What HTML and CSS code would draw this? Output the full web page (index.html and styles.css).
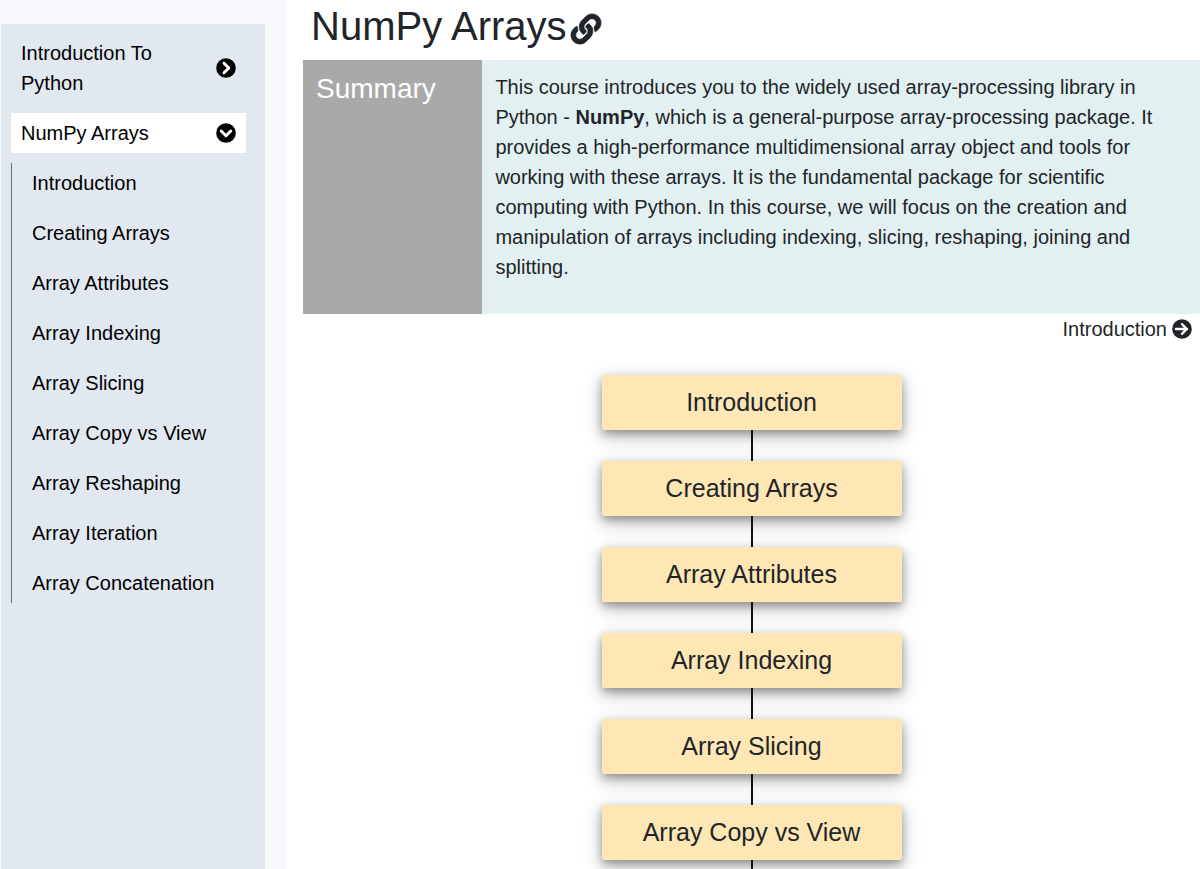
FILE: index.html
```
<!DOCTYPE html>
<html lang="en">
<head>
    <meta charset="UTF-8" />
    <meta name="viewport" content="width=device-width, initial-scale=1.0" />
    <title>NumPy Arrays</title>
    <link rel="stylesheet" href="styles.css">
</head>
<body>
<div class="layout">
    <aside class="sidebar">
        <nav class="sidebar-panel">
            <button class="course">
                <span>Introduction To Python</span>
                <svg class="icon" viewBox="0 0 20 20"><circle cx="10" cy="10" r="9.8" fill="currentColor"/><path class="mark-light" d="M8 5.2l4.8 4.8L8 14.8"/></svg>
            </button>
            <button class="course active">
                <span>NumPy Arrays</span>
                <svg class="icon" viewBox="0 0 20 20"><circle cx="10" cy="10" r="9.8" fill="currentColor"/><path class="mark-light" d="M5.2 8l4.8 4.8L14.8 8"/></svg>
            </button>
            <ul class="lessons">
                <li><a href="#introduction">Introduction</a></li>
                <li><a href="#creating">Creating Arrays</a></li>
                <li><a href="#attributes">Array Attributes</a></li>
                <li><a href="#indexing">Array Indexing</a></li>
                <li><a href="#slicing">Array Slicing</a></li>
                <li><a href="#copy-view">Array Copy vs View</a></li>
                <li><a href="#reshaping">Array Reshaping</a></li>
                <li><a href="#iteration">Array Iteration</a></li>
                <li><a href="#concatenation">Array Concatenation</a></li>
            </ul>
        </nav>
    </aside>

    <main class="content">
        <h1>
            NumPy Arrays
            <a class="permalink" href="#" aria-label="Link to this course">
                <svg viewBox="0 0 512 512"><path fill="currentColor" stroke="currentColor" stroke-width="14" d="M326.612 185.391c59.747 59.809 58.927 155.698.36 214.59-.11.12-.24.25-.36.37l-67.2 67.2c-59.27 59.27-155.699 59.262-214.96 0-59.27-59.26-59.27-155.7 0-214.96l37.106-37.106c9.84-9.84 26.786-3.3 27.294 10.606.648 17.722 3.826 35.527 9.69 52.721 1.986 5.822.567 12.262-3.783 16.612l-13.087 13.087c-28.026 28.026-28.905 73.66-1.155 101.96 28.024 28.579 74.086 28.749 102.325.51l67.2-67.19c28.191-28.191 28.073-73.757 0-101.83-3.701-3.694-7.429-6.564-10.341-8.569a16.037 16.037 0 0 1-6.947-12.606c-.396-10.567 3.348-21.456 11.698-29.806l21.054-21.055c5.521-5.521 14.182-6.199 20.584-1.731a152.482 152.482 0 0 1 20.522 17.197zM467.547 44.449c-59.261-59.262-155.69-59.27-214.96 0l-67.2 67.2c-.12.12-.25.25-.36.37-58.566 58.892-59.387 154.781.36 214.59a152.454 152.454 0 0 0 20.521 17.196c6.402 4.468 15.064 3.789 20.584-1.731l21.054-21.055c8.35-8.35 12.094-19.239 11.698-29.806a16.037 16.037 0 0 0-6.947-12.606c-2.912-2.005-6.64-4.875-10.341-8.569-28.073-28.073-28.191-73.639 0-101.83l67.2-67.19c28.239-28.239 74.3-28.069 102.325.51 27.75 28.3 26.872 73.934-1.155 101.96l-13.087 13.087c-4.35 4.35-5.769 10.79-3.783 16.612 5.864 17.194 9.042 34.999 9.69 52.721.509 13.906 17.454 20.446 27.294 10.606l37.106-37.106c59.271-59.259 59.271-155.699.001-214.959z"/></svg>
            </a>
        </h1>

        <section class="summary">
            <h2>Summary</h2>
            <p>This course introduces you to the widely used array-processing library in Python - <strong>NumPy</strong>, which is a general-purpose array-processing package. It provides a high-performance multidimensional array object and tools for working with these arrays. It is the fundamental package for scientific computing with Python. In this course, we will focus on the creation and manipulation of arrays including indexing, slicing, reshaping, joining and splitting.</p>
        </section>

        <div class="pager">
            <a href="#introduction">
                Introduction
                <svg class="icon" viewBox="0 0 20 20"><circle cx="10" cy="10" r="9.8" fill="currentColor"/><path class="mark-light arrow" d="M4 10h11M10 5.2l4.8 4.8-4.8 4.8"/></svg>
            </a>
        </div>

        <!-- course roadmap -->
        <div class="roadmap">
            <a class="step" href="#introduction">Introduction</a>
            <a class="step" href="#creating">Creating Arrays</a>
            <a class="step" href="#attributes">Array Attributes</a>
            <a class="step" href="#indexing">Array Indexing</a>
            <a class="step" href="#slicing">Array Slicing</a>
            <a class="step" href="#copy-view">Array Copy vs View</a>
        </div>
    </main>
</div>
</body>
</html>
```
FILE: styles.css
```
* {
    box-sizing: border-box;
}
body {
    margin: 0;
    font-family: "Liberation Sans", Arial, sans-serif;
    font-size: 20px;
    line-height: 30px;
    color: #212529;
    background-color: #fff;
}
a {
    color: inherit;
    text-decoration: none;
}
.layout {
    display: flex;
    height: 100vh;
    overflow: hidden;
}
.icon {
    width: 20px;
    height: 20px;
    flex-shrink: 0;
}
.mark-light {
    fill: none;
    stroke: #fff;
    stroke-width: 3;
    stroke-linecap: round;
    stroke-linejoin: round;
}
.mark-light.arrow {
    stroke-width: 2.4;
}

/* sidebar */
.sidebar {
    width: 286px;
    flex-shrink: 0;
    display: flex;
    padding: 24px 21px 0 1px;
    background-color: #f6f8fb;
    color: #000;
}
.sidebar-panel {
    flex: 1;
    display: flex;
    flex-direction: column;
    gap: 10px;
    padding: 9px 19px 0 10px;
    background-color: #e2e8f0;
}
.course {
    display: flex;
    align-items: center;
    justify-content: space-between;
    gap: 20px;
    padding: 5px 10px;
    border: none;
    background-color: transparent;
    font: inherit;
    color: inherit;
    text-align: left;
    cursor: pointer;
}
.course.active {
    background-color: #fff;
}
.lessons {
    display: flex;
    flex-direction: column;
    gap: 10px;
    margin: 0;
    padding: 0;
    list-style: none;
    border-left: 1px solid #6b6f76;
}
.lessons a {
    display: block;
    padding: 5px 0 5px 20px;
}

/* content */
.content {
    flex: 1;
    padding-left: 17px;
}
h1 {
    display: flex;
    align-items: center;
    gap: 4px;
    margin: 2px 0 10px;
    padding-left: 8px;
    font-size: 40px;
    line-height: 48px;
    font-weight: normal;
}
.permalink {
    padding-top: 6px;
}
.permalink svg {
    display: block;
    width: 30px;
    height: 30px;
    overflow: visible;
}
.summary {
    display: grid;
    grid-template-columns: 1fr 4fr;
    background-color: #e2f0f1;
}
.summary h2 {
    margin: 0;
    padding: 12px 13px;
    font-size: 28px;
    line-height: 34px;
    font-weight: normal;
    color: #fff;
    background-color: #a9a9a9;
}
.summary p {
    margin: 0;
    padding: 12px 13px 32px;
}
.pager {
    display: flex;
    justify-content: flex-end;
    padding-right: 8px;
}
.pager a {
    display: flex;
    align-items: center;
    gap: 5px;
}

/* roadmap */
.roadmap {
    display: flex;
    flex-direction: column;
    align-items: center;
    margin-top: 31px;
}
.step {
    position: relative;
    width: 300px;
    margin-bottom: 31px;
    padding: 12px;
    border-radius: 2px;
    background-color: #ffe7b5;
    box-shadow: 0 4px 8px rgba(0, 0, 0, 0.3), 0 6px 20px rgba(0, 0, 0, 0.25);
    font-size: 25px;
    line-height: 31px;
    text-align: center;
}
.step::after {
    content: "";
    position: absolute;
    top: 100%;
    left: calc(50% - 1px);
    width: 2px;
    height: 31px;
    background-color: #111;
}
```
